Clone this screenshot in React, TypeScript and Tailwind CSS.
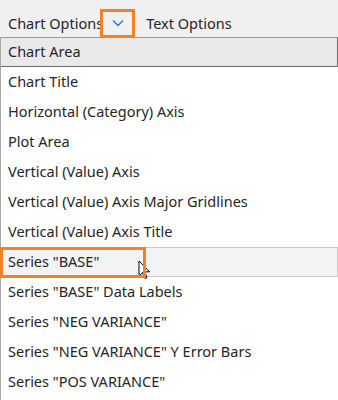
import React from 'react';

const items = [
  'Chart Area',
  'Chart Title',
  'Horizontal (Category) Axis',
  'Plot Area',
  'Vertical (Value) Axis',
  'Vertical (Value) Axis Major Gridlines',
  'Vertical (Value) Axis Title',
  'Series "BASE"',
  'Series "BASE" Data Labels',
  'Series "NEG VARIANCE"',
  'Series "NEG VARIANCE" Y Error Bars',
  'Series "POS VARIANCE"',
];

const Cursor = () => (
  <svg className="absolute left-[137px] top-[12px]" width="13" height="20" viewBox="0 0 13 20">
    <path d="M1 1 L1 16 L4.5 12.5 L7 18.5 L9 17.6 L6.6 11.8 L11.5 11.8 Z" fill="#fff" stroke="#000" strokeWidth="1" />
  </svg>
);

export default function App() {
  return (
    <div className="w-[338px] h-[400px] overflow-hidden bg-white text-[14.5px] text-[#262626]" style={{ fontFamily: '"Noto Sans", "Open Sans", sans-serif' }}>
      {/* tab strip */}
      <div className="h-[37px] bg-[#f0f0f0] flex items-end">
        <span className="pl-[8px] pr-[1px] mb-[3px] leading-[22px]">Chart Options</span>
        <div className="-ml-[4px] w-[35px] h-[28px] border-[3px] border-b-[2px] border-[#f58025] flex items-center justify-center">
          <svg width="12" height="8" viewBox="0 0 12 8" className="-mt-[2px]">
            <path d="M1 1.5 L6 6.5 L11 1.5" fill="none" stroke="#2b7cd3" strokeWidth="1.5" />
          </svg>
        </div>
        <span className="ml-[11px] mb-[3px] leading-[22px]">Text Options</span>
      </div>

      {/* list */}
      <div className="border-l border-[#a8a8a8] h-[363px]">
        {items.map((label, i) => {
          let cls = 'relative h-[30px] flex items-center pl-[7px]';
          if (i === 0) cls += ' bg-[#e9e9e9] border border-[#6b6b6b] border-t-[#9a9a9a] border-l-0';
          if (i === 7) cls += ' bg-[#f3f3f3] border border-[#c9c9c9] border-l-0';
          return (
            <div key={label} className={cls}>
              {label}
              {i === 7 && (
                <>
                  <Cursor />
                  <div className="absolute -left-[1px] -top-[1px] w-[146px] h-[31px] border-[3px] border-[#f58025]" />
                </>
              )}
            </div>
          );
        })}
      </div>
    </div>
  );
}
